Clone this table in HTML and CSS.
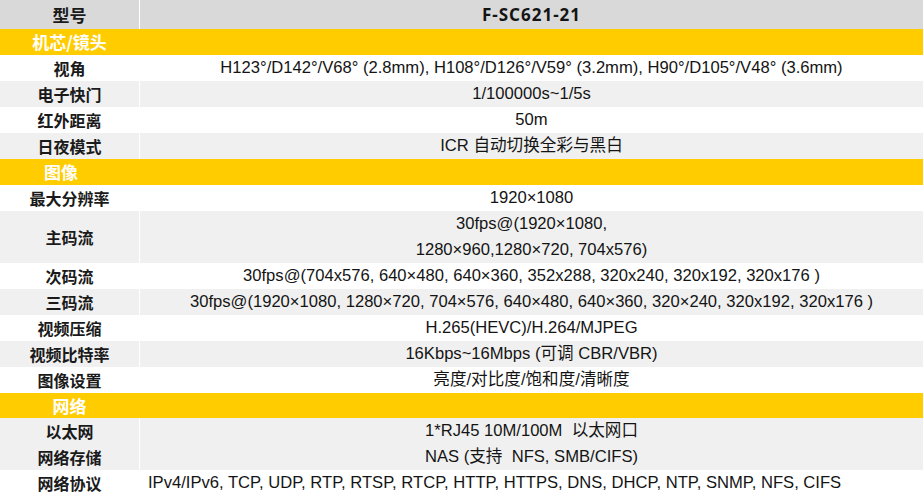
FILE: index.html
```html
<!DOCTYPE html>
<html lang="zh-CN">
<head>
<meta charset="utf-8">
<title>F-SC621-21</title>
<link rel="stylesheet" href="styles.css">
</head>
<body>
<div class="spec">
  <div class="row head">
    <div class="label">型号</div>
    <div class="value model">F-SC621-21</div>
  </div>

  <div class="section"><span class="sec-title">机芯/镜头</span></div>
  <div class="row"><div class="label">视角</div><div class="value">H123°/D142°/V68° (2.8mm), H108°/D126°/V59° (3.2mm), H90°/D105°/V48° (3.6mm)</div></div>
  <div class="row alt"><div class="label">电子快门</div><div class="value">1/100000s~1/5s</div></div>
  <div class="row"><div class="label">红外距离</div><div class="value">50m</div></div>
  <div class="row alt"><div class="label">日夜模式</div><div class="value">ICR 自动切换全彩与黑白</div></div>

  <div class="section"><span class="sec-title sec-shift">图像</span></div>
  <div class="row"><div class="label">最大分辨率</div><div class="value">1920×1080</div></div>
  <div class="row alt"><div class="label">主码流</div><div class="value">30fps@(1920×1080,<br>1280×960,1280×720, 704x576)</div></div>
  <div class="row"><div class="label">次码流</div><div class="value">30fps@(704x576, 640×480, 640×360, 352x288, 320x240, 320x192, 320x176 )</div></div>
  <div class="row alt"><div class="label">三码流</div><div class="value">30fps@(1920×1080, 1280×720, 704×576, 640×480, 640×360, 320×240, 320x192, 320x176 )</div></div>
  <div class="row"><div class="label">视频压缩</div><div class="value">H.265(HEVC)/H.264/MJPEG</div></div>
  <div class="row alt"><div class="label">视频比特率</div><div class="value">16Kbps~16Mbps (可调 CBR/VBR)</div></div>
  <div class="row"><div class="label">图像设置</div><div class="value">亮度/对比度/饱和度/清晰度</div></div>

  <div class="section short"><span class="sec-title">网络</span></div>
  <div class="row alt"><div class="label">以太网</div><div class="value">1*RJ45 10M/100M &nbsp;以太网口</div></div>
  <div class="row alt"><div class="label">网络存储</div><div class="value">NAS (支持 &nbsp;NFS, SMB/CIFS)</div></div>
  <div class="row"><div class="label">网络协议</div><div class="value left">IPv4/IPv6, TCP, UDP, RTP, RTSP, RTCP, HTTP, HTTPS, DNS, DHCP, NTP, SNMP, NFS, CIFS</div></div>
</div>
</body>
</html>
```

FILE: styles.css
```css
html, body {
  margin: 0;
  padding: 0;
  background: #ffffff;
}

.spec {
  width: 923px;
  display: flex;
  flex-direction: column;
  color: #141414;
  font-family: "Liberation Sans", "Noto Sans CJK SC", sans-serif;
  font-size: 16.6px;
  line-height: 26px;
}

.row {
  display: flex;
  background: #ffffff;
}

.row.alt {
  background: #f0f0f0;
}

.row.head {
  background: #d9d9d9;
  height: 29px;
  line-height: 29px;
}

.label {
  width: 139px;
  flex: none;
  border-right: 1px solid #ffffff;
  display: flex;
  align-items: center;
  justify-content: center;
  font-family: "Noto Sans CJK SC", sans-serif;
  font-weight: 700;
  font-size: 16px;
  color: #1a1a1a;
}

.head .label {
  font-size: 17px;
}

.value {
  flex: 1;
  text-align: center;
  white-space: nowrap;
}

.value.left {
  text-align: left;
  padding-left: 8px;
}

.value.model {
  font-family: "Noto Sans", sans-serif;
  font-weight: 700;
  font-size: 17px;
  letter-spacing: 1px;
}

.section {
  background: #ffcc00;
  height: 26px;
  display: flex;
  align-items: center;
}

.section.short {
  height: 25px;
}

.sec-title {
  width: 139px;
  text-align: center;
  color: #ffffff;
  font-family: "Noto Sans CJK SC", sans-serif;
  font-weight: 700;
  font-size: 17px;
}

.sec-title.sec-shift {
  padding-right: 17px;
  box-sizing: border-box;
}
```
